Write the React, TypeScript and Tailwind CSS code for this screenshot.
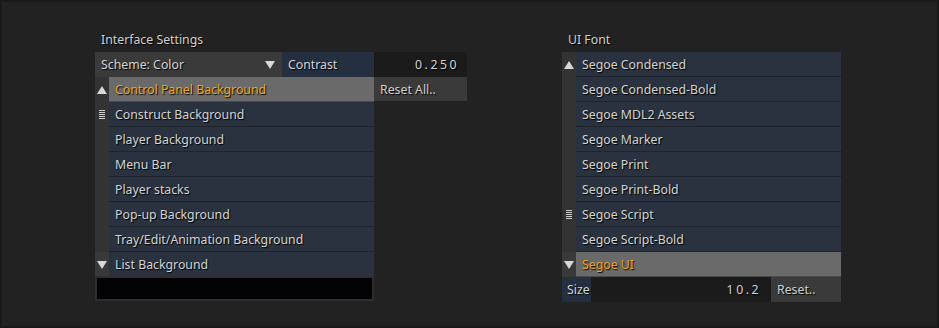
import { ReactNode } from "react"

const leftItems = [
  "Control Panel Background",
  "Construct Background",
  "Player Background",
  "Menu Bar",
  "Player stacks",
  "Pop-up Background",
  "Tray/Edit/Animation Background",
  "List Background",
]

const fontItems = [
  "Segoe Condensed",
  "Segoe Condensed-Bold",
  "Segoe MDL2 Assets",
  "Segoe Marker",
  "Segoe Print",
  "Segoe Print-Bold",
  "Segoe Script",
  "Segoe Script-Bold",
  "Segoe UI",
]

function UpArrow() {
  return (
    <svg width="10" height="8" viewBox="0 0 10 8">
      <path d="M5 0 L10 8 L0 8 Z" fill="#d8d8d8" />
    </svg>
  )
}

function DownArrow() {
  return (
    <svg width="10" height="8" viewBox="0 0 10 8">
      <path d="M0 0 L10 0 L5 8 Z" fill="#d8d8d8" />
    </svg>
  )
}

function Grip() {
  return (
    <div className="flex flex-col gap-[1px]">
      <div className="h-[1px] w-[6px] bg-[#cfcfcf]" />
      <div className="h-[1px] w-[6px] bg-[#cfcfcf]" />
      <div className="h-[1px] w-[6px] bg-[#cfcfcf]" />
      <div className="h-[1px] w-[6px] bg-[#cfcfcf]" />
      <div className="h-[1px] w-[6px] bg-[#cfcfcf]" />
    </div>
  )
}

function ListBox({
  items,
  selected,
  gripAt,
}: {
  items: string[]
  selected: number
  gripAt: number
}) {
  const last = items.length - 1
  return (
    <div className="flex w-[279px]">
      <div className="flex w-[14px] flex-col bg-[#333333]">
        {items.map((_, i) => (
          <div
            key={i}
            className={
              i === last
                ? "flex h-[25px] items-center justify-center bg-[#393939]"
                : "flex h-[25px] items-center justify-center"
            }
          >
            {i === 0 && <UpArrow />}
            {i === gripAt && <Grip />}
            {i === last && <DownArrow />}
          </div>
        ))}
      </div>
      <div className="flex flex-1 flex-col">
        {items.map((item, i) => (
          <Row key={item} active={i === selected}>
            {item}
          </Row>
        ))}
      </div>
    </div>
  )
}

function Row({ active, children }: { active: boolean; children: ReactNode }) {
  return (
    <div
      className={
        active
          ? "flex h-[25px] items-center border-b border-[#4a4a4a] bg-[#6a6a6a] pl-[6px] pt-[2px] text-[#f2a81d]"
          : "flex h-[25px] items-center border-b border-[#1d242d] bg-[#29323e] pl-[6px] pt-[2px] text-[#d4d4d4]"
      }
    >
      {children}
    </div>
  )
}

export default function App() {
  return (
    <div
      className="h-[328px] w-[939px] border-2 border-[#191919] bg-[#222222] text-[12.3px] [text-shadow:1px_1px_1px_#000]"
      style={{ fontFamily: '"Noto Sans", "Open Sans", sans-serif' }}
    >
      <div className="flex gap-[95px] pl-[93px] pt-[27px]">
        {/* Interface settings */}
        <div className="flex w-[372px] flex-col">
          <div className="flex h-[23px] items-center pl-[6px] text-[#cfcfcf]">
            Interface Settings
          </div>
          <div className="flex h-[25px]">
            <div className="flex w-[187px] items-center justify-between bg-[#3a3a3a] pl-[6px] pr-[7px] pt-[1px] text-[#d4d4d4]">
              <span>Scheme: Color</span>
              <DownArrow />
            </div>
            <div className="flex w-[92px] items-center bg-[#243040] pl-[6px] pt-[1px] text-[#d4d4d4]">
              Contrast
            </div>
            <div className="flex w-[93px] items-center justify-end bg-[#1b1b1b] pr-[8px] pt-[1px] tracking-[2.5px] text-[#d4d4d4]">
              0.250
            </div>
          </div>
          <div className="flex">
            <ListBox items={leftItems} selected={0} gripAt={1} />
            <div className="flex w-[93px] flex-col">
              <div className="flex h-[24px] items-center bg-[#3a3a3a] pl-[6px] pt-[2px] text-[#d0d0d0]">
                Reset All..
              </div>
            </div>
          </div>
          <div className="mt-[-1px] w-[279px] border-2 border-[#2e2e2e]">
            <div className="h-[21px] bg-[#030305]" />
          </div>
        </div>

        {/* UI font */}
        <div className="flex w-[279px] flex-col">
          <div className="flex h-[23px] items-center pl-[6px] text-[#cfcfcf]">UI Font</div>
          <ListBox items={fontItems} selected={8} gripAt={6} />
          <div className="flex h-[25px]">
            <div className="flex w-[29px] items-center bg-[#243040] pl-[5px] pt-[2px] text-[#d4d4d4]">
              Size
            </div>
            <div className="flex w-[180px] items-center justify-end bg-[#1b1b1b] pr-[10px] pt-[2px] tracking-[2.5px] text-[#d4d4d4]">
              10.2
            </div>
            <div className="flex w-[70px] items-center bg-[#3a3a3a] pl-[6px] pt-[2px] text-[#d0d0d0]">
              Reset..
            </div>
          </div>
        </div>
      </div>
    </div>
  )
}
